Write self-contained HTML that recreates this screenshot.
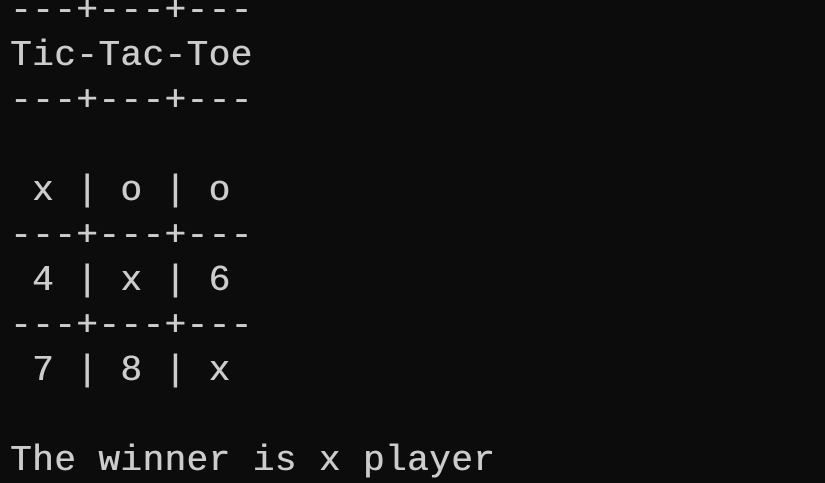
<!DOCTYPE html>
<html><head><style>
html,body{margin:0;padding:0;background:#0c0c0c;width:825px;height:482px;overflow:hidden}
pre{position:absolute;left:10px;top:-12px;margin:0;font-family:"Liberation Mono",monospace;font-size:36px;line-height:45px;color:#cccccc;letter-spacing:0.45px;text-shadow:0.5px 0 0 #cccccc}
</style></head><body><pre>---+---+---
Tic-Tac-Toe
---+---+---

 x | o | o
---+---+---
 4 | x | 6
---+---+---
 7 | 8 | x

The winner is x player</pre></body></html>
